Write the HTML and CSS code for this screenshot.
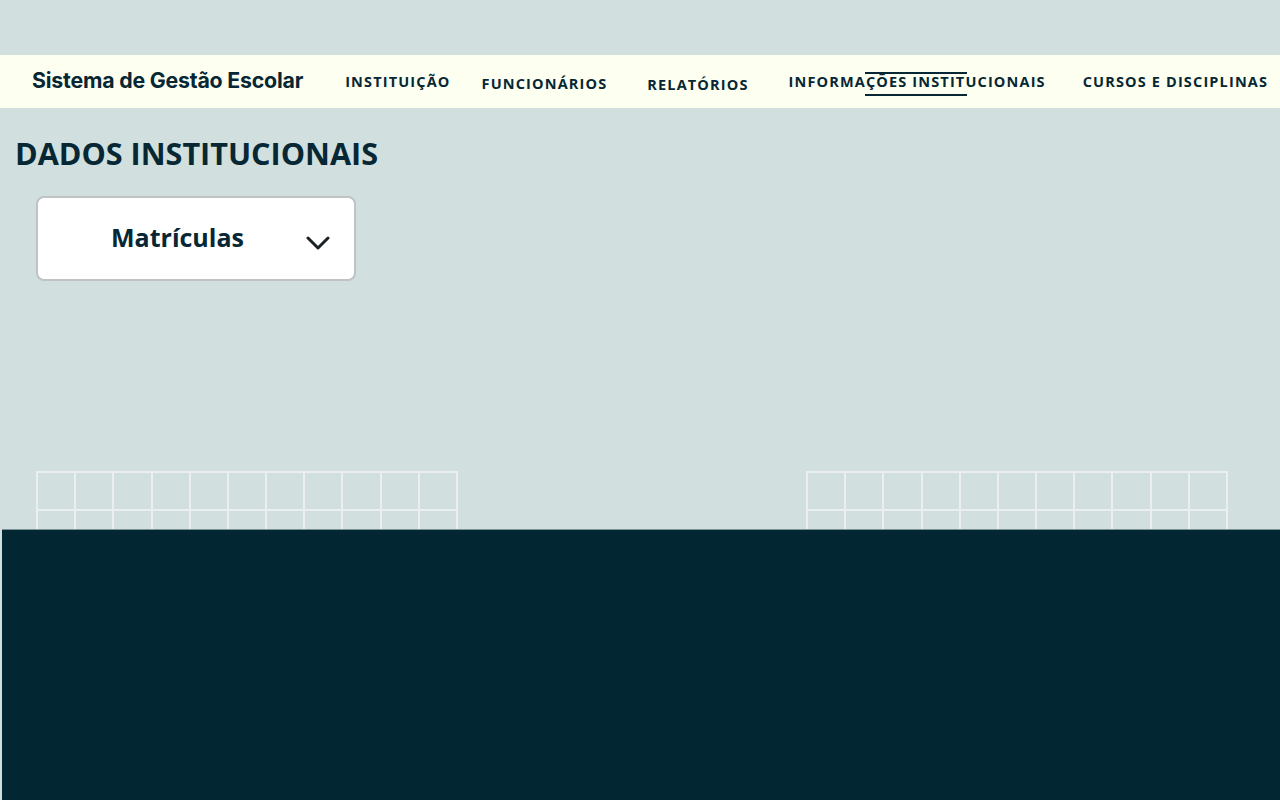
FILE: index.html
```html
<!DOCTYPE html>
<html lang="pt-BR">
<head>
<meta charset="utf-8">
<title>Sistema de Gestão Escolar</title>
<link rel="stylesheet" href="styles.css">
</head>
<body>
<div class="top-space"></div>
<header class="header">
  <div class="brand">Sistema de Gestão Escolar</div>
  <nav class="nav">
    <a class="nav-item n1" href="#">INSTITUIÇÃO</a>
    <a class="nav-item n2" href="#">FUNCIONÁRIOS</a>
    <a class="nav-item n3" href="#">RELATÓRIOS</a>
    <a class="nav-item n4 active" href="#">INFORMAÇÕES INSTITUCIONAIS</a>
    <a class="nav-item n5" href="#">CURSOS E DISCIPLINAS</a>
  </nav>
</header>
<main class="main">
  <h1 class="page-title">DADOS INSTITUCIONAIS</h1>
  <div class="select-box">
    <span class="select-label">Matrículas</span>
    <svg class="chevron" width="24" height="16" viewBox="0 0 24 16"><path d="M2 3 L12 13 L22 3" fill="none" stroke="#1b2226" stroke-width="3" stroke-linecap="round" stroke-linejoin="round"/></svg>
  </div>
  <section class="grids">
    <div class="grid">
      <span></span><span></span><span></span><span></span><span></span><span></span><span></span><span></span><span></span><span></span><span></span>
      <span></span><span></span><span></span><span></span><span></span><span></span><span></span><span></span><span></span><span></span><span></span>
    </div>
    <div class="grid">
      <span></span><span></span><span></span><span></span><span></span><span></span><span></span><span></span><span></span><span></span><span></span>
      <span></span><span></span><span></span><span></span><span></span><span></span><span></span><span></span><span></span><span></span><span></span>
    </div>
  </section>
</main>
<footer class="footer"></footer>
</body>
</html>
```
FILE: styles.css
```css
html, body {
  margin: 0;
  padding: 0;
}
body {
  background: #d1dfdf;
  font-family: "Open Sans", "Liberation Sans", sans-serif;
  color: #062733;
  overflow: hidden;
}
.top-space {
  height: 55px;
}
.header {
  height: 53px;
  background: #fdfff1;
  display: flex;
  align-items: center;
}
.brand {
  font-family: Inter, "Liberation Sans", sans-serif;
  font-weight: 700;
  font-size: 21.3px;
  letter-spacing: -0.2px;
  color: #062733;
  margin-left: 32px;
  margin-top: -4px;
  white-space: nowrap;
}
.nav {
  display: flex;
  align-items: center;
  height: 100%;
}
.nav-item {
  position: relative;
  font-family: "Open Sans", sans-serif;
  font-weight: 700;
  font-size: 14.5px;
  letter-spacing: 1.15px;
  color: #062733;
  text-decoration: none;
  white-space: nowrap;
}
.n1 { margin-left: 42px; margin-top: -1px; }
.n2 { margin-left: 31px; margin-top: 3px; }
.n3 { margin-left: 40px; margin-top: 5px; }
.n4 { margin-left: 40px; margin-top: -1px; }
.n5 { margin-left: 37px; margin-top: -1px; }
.active::before,
.active::after {
  content: "";
  position: absolute;
  left: 76px;
  width: 102px;
  height: 2px;
  background: #062733;
}
.active::before {
  top: 0;
}
.active::after {
  bottom: -5px;
}
.page-title {
  margin: 0;
  padding: 24px 0 0 15px;
  font-family: "Open Sans", sans-serif;
  font-weight: 700;
  font-size: 30.6px;
  line-height: 42px;
  color: #062733;
}
.select-box {
  margin: 22px 0 0 36px;
  width: 316px;
  height: 81px;
  background: #ffffff;
  border: 2px solid #bfc3c4;
  border-radius: 8px;
  display: flex;
  align-items: center;
}
.select-label {
  font-family: "Open Sans", sans-serif;
  font-weight: 700;
  font-size: 25px;
  color: #062733;
  margin-left: 73px;
  margin-top: -3px;
}
.chevron {
  margin-left: auto;
  margin-right: 24px;
  margin-top: 8px;
}
.grids {
  margin-top: 190px;
  height: 58px;
  overflow: hidden;
  display: flex;
  padding-left: 36px;
  gap: 348px;
}
.grid {
  width: 422px;
  box-sizing: border-box;
  display: grid;
  grid-template-columns: repeat(11, 1fr);
  grid-auto-rows: 36px;
  gap: 2px;
  padding: 2px;
  background: #ebefef;
  align-self: flex-start;
}
.grid span {
  background: #d1dfdf;
}
.footer {
  margin-left: 2px;
  height: 300px;
  background: #032633;
  border-top: 1px solid #7d9294;
}
```
